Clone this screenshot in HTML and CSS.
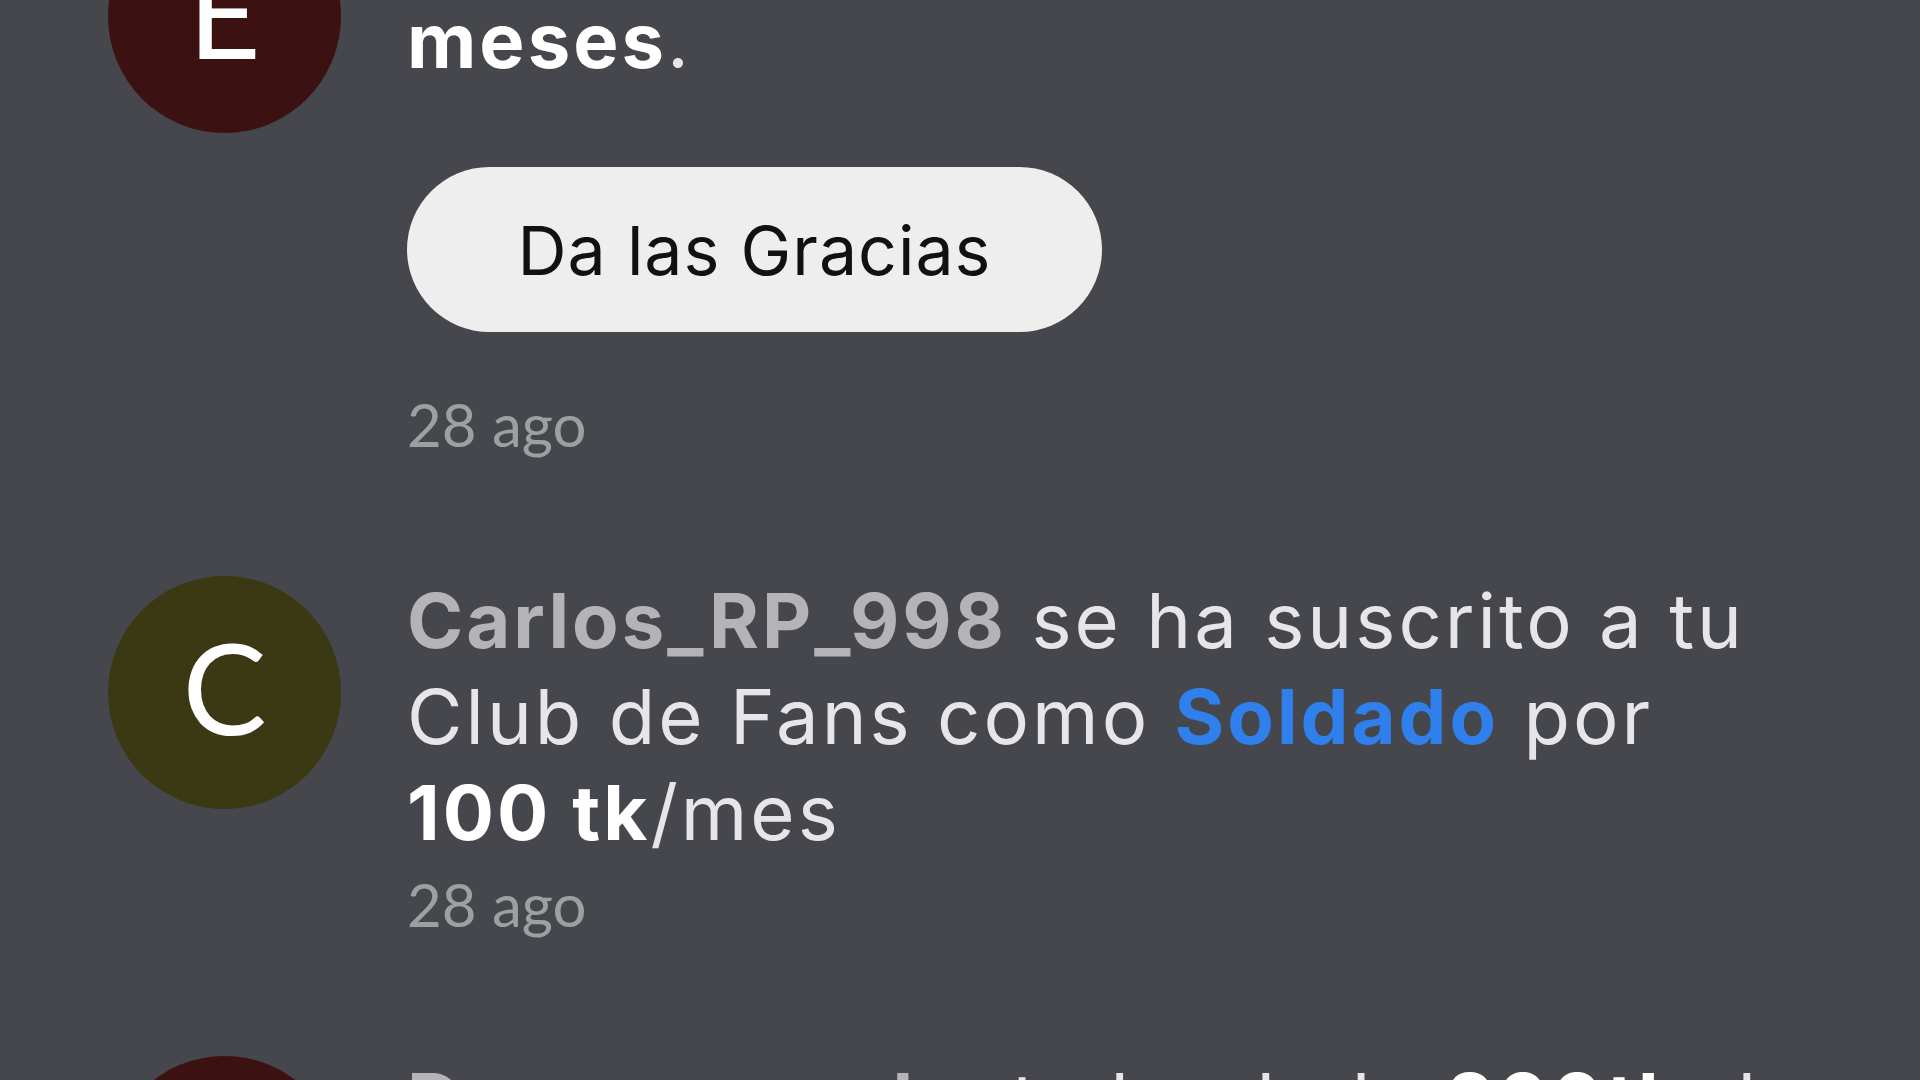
FILE: index.html
```html
<!DOCTYPE html>
<html lang="es">
<head>
    <meta charset="UTF-8">
    <title>Notificaciones</title>
    <link rel="stylesheet" href="styles.css">
</head>
<body>
    <div class="feed">
        <div class="item">
            <div class="avatar avatar-maroon">E</div>
            <div class="body">
                <p class="msg"><span class="user">Elena_Ruiz</span> lleva suscrita 3<br><b class="strong">meses</b>.</p>
                <button class="thanks">Da las Gracias</button>
                <p class="time time-after-action">28 ago</p>
            </div>
        </div>
        <div class="item">
            <div class="avatar avatar-olive">C</div>
            <div class="body">
                <p class="msg"><span class="user">Carlos_RP_998</span> se ha suscrito a tu Club de Fans como <span class="tier">Soldado</span> por <span class="price"><b class="strong">100 tk</b>/mes</span></p>
                <p class="time">28 ago</p>
            </div>
        </div>
        <div class="item">
            <div class="avatar avatar-maroon">D</div>
            <div class="body">
                <p class="msg"><span class="user">Dracomarenko</span> te ha dado <b class="strong">200tk</b> de propina</p>
                <p class="time">28 ago</p>
            </div>
        </div>
    </div>
</body>
</html>
```

FILE: styles.css
```css
* {
    margin: 0;
    padding: 0;
    box-sizing: border-box;
}

html, body {
    width: 100%;
    height: 100%;
}

body {
    background-color: #46474c;
    font-family: Inter, Lato, "Noto Sans", sans-serif;
    overflow: hidden;
}

/* list is scrolled: first item starts above the viewport */
.feed {
    display: flex;
    flex-direction: column;
    gap: 112px;
    padding: 0 108px;
    margin-top: -104px;
}

.item {
    display: flex;
    align-items: flex-start;
    gap: 66px;
}

.avatar {
    flex: 0 0 233px;
    height: 233px;
    margin-top: 4px;
    border-radius: 50%;
    display: flex;
    align-items: center;
    justify-content: center;
    padding-bottom: 12px;
    color: #ffffff;
    font-family: Lato, sans-serif;
    font-size: 126px;
    font-weight: 400;
}

.avatar-maroon {
    background-color: #3c1111;
}

.avatar-olive {
    background-color: #3a3913;
}

.body {
    flex: 1;
}

.msg {
    font-size: 76px;
    line-height: 96px;
    letter-spacing: 3px;
    color: #e6e6e8;
}

.user {
    color: #b4b4b6;
    font-weight: 700;
}

.strong {
    color: #ffffff;
    font-weight: 700;
}

.tier {
    color: #2f80ec;
    font-weight: 700;
}

.price {
    white-space: nowrap;
}

.thanks {
    display: block;
    width: 695px;
    height: 165px;
    margin-top: 79px;
    border: none;
    border-radius: 83px;
    background-color: #eeeeee;
    color: #111111;
    font-family: Inter, Lato, sans-serif;
    font-size: 68px;
    font-weight: 400;
    letter-spacing: 1px;
}

.time {
    margin-top: 8px;
    font-family: Lato, sans-serif;
    font-size: 60px;
    line-height: 72px;
    color: #9e9fa3;
}

.time-after-action {
    margin-top: 56px;
}
```
